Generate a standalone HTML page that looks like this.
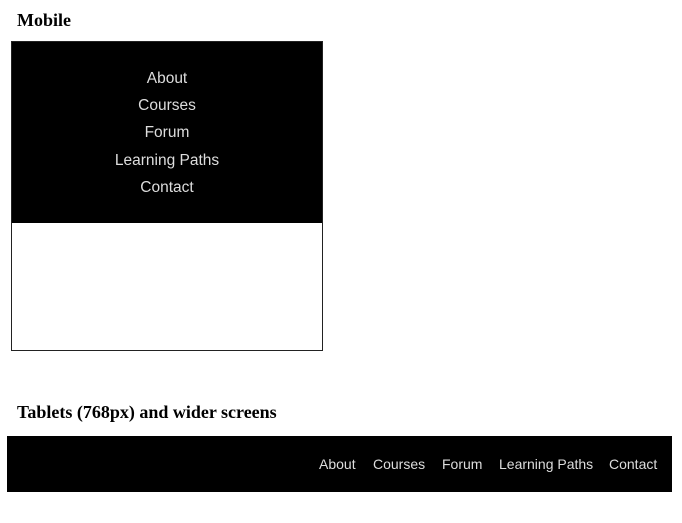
<!DOCTYPE html>
<html><head><style>
body{margin:0;background:#fff;width:682px;height:523px;position:relative;font-family:"Liberation Sans",Arial,sans-serif;}
h2{position:absolute;margin:0;font-family:"Liberation Serif",serif;font-weight:bold;font-size:18px;color:#000;}
.m{position:absolute;left:11px;top:41px;width:310px;height:308px;border:1px solid #222;background:#fff;}
.m .nav{background:#000;height:181px;padding-top:27px;box-sizing:border-box;text-align:center;}
.m .nav div{color:#ddd;font-size:15.5px;height:27.2px;line-height:20px;}
.d{position:absolute;left:7px;top:436px;width:665px;height:56px;background:#000;}
.d span{position:absolute;top:19px;color:#ddd;font-size:14px;line-height:18px;}
</style></head><body>
<h2 style="left:17px;top:10px">Mobile</h2>
<div class="m"><div class="nav">
<div>About</div><div>Courses</div><div>Forum</div><div>Learning Paths</div><div>Contact</div>
</div></div>
<h2 style="left:17px;top:402px">Tablets (768px) and wider screens</h2>
<div class="d">
<span style="left:312px">About</span>
<span style="left:366px">Courses</span>
<span style="left:435px">Forum</span>
<span style="left:492px">Learning Paths</span>
<span style="left:602px">Contact</span>
</div>
</body></html>
